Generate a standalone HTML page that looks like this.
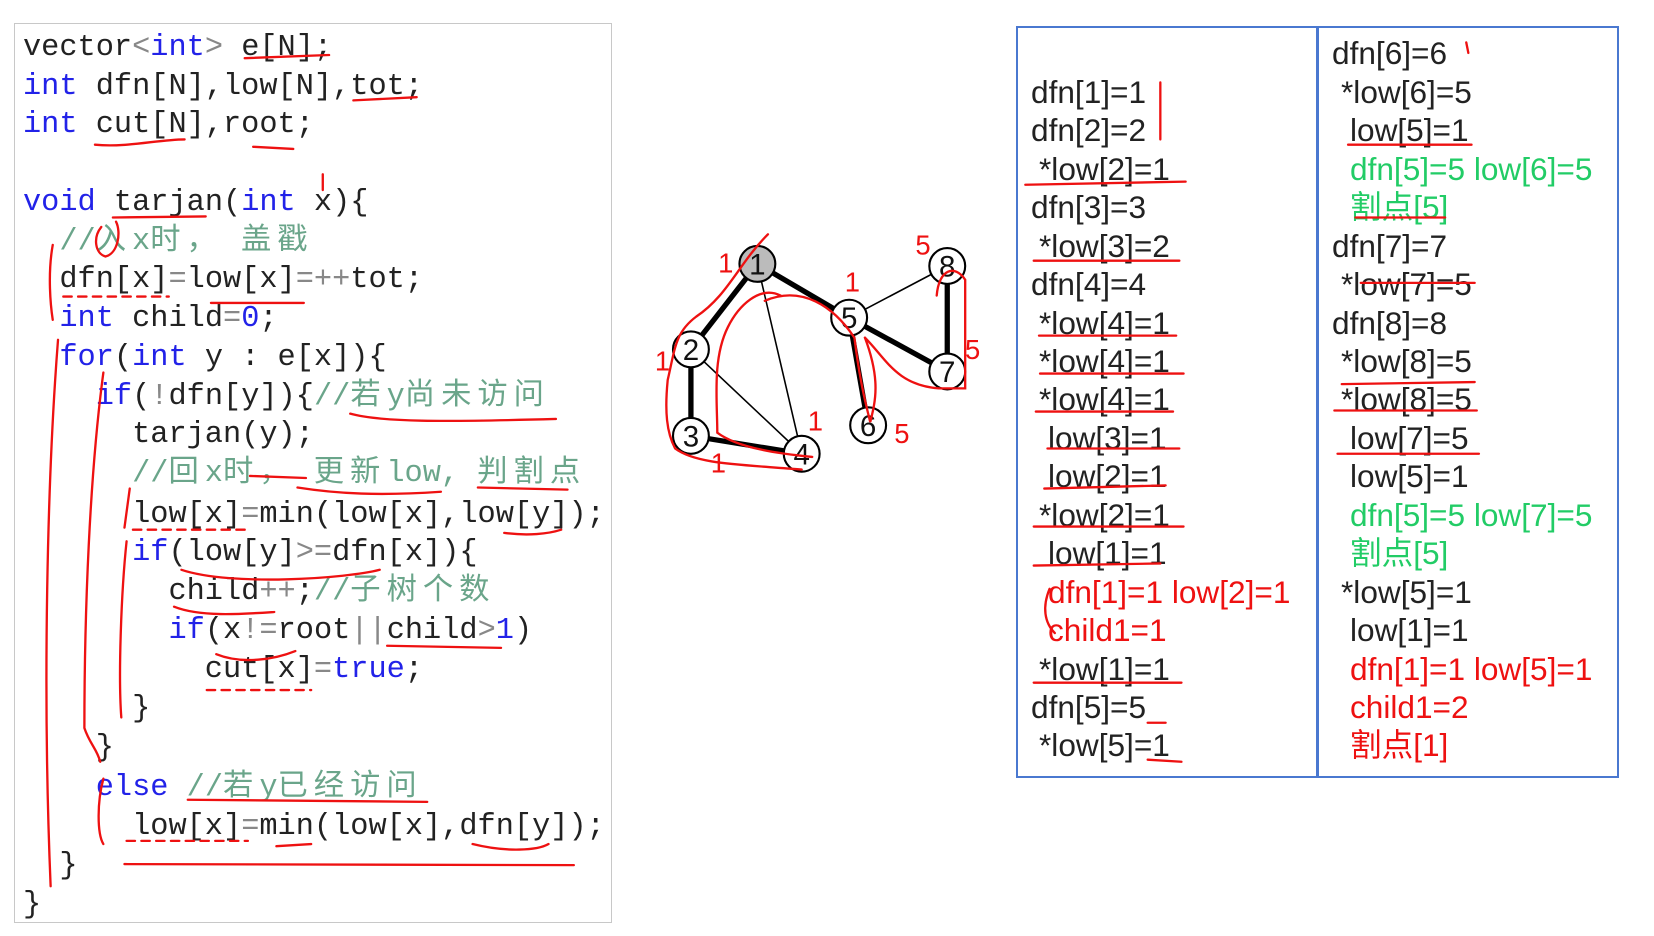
<!DOCTYPE html>
<html><head><meta charset="utf-8"><style>
body{margin:0;width:1654px;height:936px;background:#fff;position:relative;overflow:hidden}
.code{position:absolute;left:14px;top:23px;width:598px;height:900px;border:1.5px solid #c8c8c8;box-sizing:border-box}
.cl{position:absolute;left:23px;font:30.3px/38px "Liberation Mono","Noto Sans CJK SC",monospace;color:#222;white-space:pre}
.k{color:#2222e8}.c{color:#6aa58a}.o{color:#888}.z{letter-spacing:6px}
.box{position:absolute;top:26px;width:302px;height:752px;border:2px solid #4a78d0;box-sizing:border-box}
.t{position:absolute;font:31.6px/36px "Liberation Sans","Noto Sans CJK SC",sans-serif;color:#222;white-space:pre}
.r{color:#ee1111}.g{color:#22cc66}
svg{position:absolute;left:0;top:0}
</style></head><body>
<div class="code"></div>
<div class="cl" style="top:29px">vector<span class="o">&lt;</span><span class="k">int</span><span class="o">&gt;</span> e[N];</div>
<div class="cl" style="top:68px"><span class="k">int</span> dfn[N],low[N],tot;</div>
<div class="cl" style="top:106px"><span class="k">int</span> cut[N],root;</div>
<div class="cl" style="top:184px"><span class="k">void</span> tarjan(<span class="k">int</span> x){</div>
<div class="cl" style="top:223px">  <span class="c">//<span class="z">入</span>x<span class="z">时，</span> <span class="z">盖戳</span></span></div>
<div class="cl" style="top:261px">  dfn[x]<span class="o">=</span>low[x]<span class="o">=++</span>tot;</div>
<div class="cl" style="top:300px">  <span class="k">int</span> child<span class="o">=</span><span class="k">0</span>;</div>
<div class="cl" style="top:339px">  <span class="k">for</span>(<span class="k">int</span> y : e[x]){</div>
<div class="cl" style="top:378px">    <span class="k">if</span>(<span class="o">!</span>dfn[y]){<span class="c">//<span class="z">若</span>y<span class="z">尚未访问</span></span></div>
<div class="cl" style="top:416px">      tarjan(y);</div>
<div class="cl" style="top:455px">      <span class="c">//<span class="z">回</span>x<span class="z">时，</span> <span class="z">更新</span>low, <span class="z">判割点</span></span></div>
<div class="cl" style="top:496px">      low[x]<span class="o">=</span>min(low[x],low[y]);</div>
<div class="cl" style="top:534px">      <span class="k">if</span>(low[y]<span class="o">&gt;=</span>dfn[x]){</div>
<div class="cl" style="top:573px">        child<span class="o">++</span>;<span class="c">//<span class="z">子树个数</span></span></div>
<div class="cl" style="top:612px">        <span class="k">if</span>(x<span class="o">!=</span>root<span class="o">||</span>child<span class="o">&gt;</span><span class="k">1</span>)</div>
<div class="cl" style="top:651px">          cut[x]<span class="o">=</span><span class="k">true</span>;</div>
<div class="cl" style="top:690px">      }</div>
<div class="cl" style="top:729px">    }</div>
<div class="cl" style="top:769px">    <span class="k">else</span> <span class="c">//<span class="z">若</span>y<span class="z">已经访问</span></span></div>
<div class="cl" style="top:808px">      low[x]<span class="o">=</span>min(low[x],dfn[y]);</div>
<div class="cl" style="top:847px">  }</div>
<div class="cl" style="top:886px">}</div>

<div class="box" style="left:1016px"></div>
<div class="box" style="left:1317px"></div>

<div class="t" style="left:1031px;top:74px">dfn[1]=1</div>
<div class="t" style="left:1031px;top:112px">dfn[2]=2</div>
<div class="t" style="left:1039px;top:151px">*low[2]=1</div>
<div class="t" style="left:1031px;top:189px">dfn[3]=3</div>
<div class="t" style="left:1039px;top:228px">*low[3]=2</div>
<div class="t" style="left:1031px;top:266px">dfn[4]=4</div>
<div class="t" style="left:1039px;top:305px">*low[4]=1</div>
<div class="t" style="left:1039px;top:343px">*low[4]=1</div>
<div class="t" style="left:1039px;top:381px">*low[4]=1</div>
<div class="t" style="left:1048px;top:420px">low[3]=1</div>
<div class="t" style="left:1048px;top:458px">low[2]=1</div>
<div class="t" style="left:1039px;top:497px">*low[2]=1</div>
<div class="t" style="left:1048px;top:535px">low[1]=1</div>
<div class="t r" style="left:1048px;top:574px">dfn[1]=1 low[2]=1</div>
<div class="t r" style="left:1048px;top:612px">child1=1</div>
<div class="t" style="left:1039px;top:651px">*low[1]=1</div>
<div class="t" style="left:1031px;top:689px">dfn[5]=5</div>
<div class="t" style="left:1039px;top:727px">*low[5]=1</div>

<div class="t" style="left:1332px;top:35px">dfn[6]=6</div>
<div class="t" style="left:1341px;top:74px">*low[6]=5</div>
<div class="t" style="left:1350px;top:112px">low[5]=1</div>
<div class="t g" style="left:1350px;top:151px">dfn[5]=5 low[6]=5</div>
<div class="t g" style="left:1350px;top:189px">割点[5]</div>
<div class="t" style="left:1332px;top:228px">dfn[7]=7</div>
<div class="t" style="left:1341px;top:266px">*low[7]=5</div>
<div class="t" style="left:1332px;top:305px">dfn[8]=8</div>
<div class="t" style="left:1341px;top:343px">*low[8]=5</div>
<div class="t" style="left:1341px;top:381px">*low[8]=5</div>
<div class="t" style="left:1350px;top:420px">low[7]=5</div>
<div class="t" style="left:1350px;top:458px">low[5]=1</div>
<div class="t g" style="left:1350px;top:497px">dfn[5]=5 low[7]=5</div>
<div class="t g" style="left:1350px;top:535px">割点[5]</div>
<div class="t" style="left:1341px;top:574px">*low[5]=1</div>
<div class="t" style="left:1350px;top:612px">low[1]=1</div>
<div class="t r" style="left:1350px;top:651px">dfn[1]=1 low[5]=1</div>
<div class="t r" style="left:1350px;top:689px">child1=2</div>
<div class="t r" style="left:1350px;top:727px">割点[1]</div>

<svg width="1654" height="936" viewBox="0 0 1568 887">
<g stroke="#000" stroke-width="5">
<line x1="718" y1="250" x2="655" y2="331"/><line x1="655" y1="331" x2="655" y2="413"/>
<line x1="655" y1="413" x2="760" y2="430"/><line x1="718" y1="250" x2="805" y2="301"/>
<line x1="805" y1="301" x2="823" y2="403"/><line x1="805" y1="301" x2="898" y2="352"/>
<line x1="898" y1="252" x2="898" y2="352"/></g>
<g stroke="#000" stroke-width="1.5">
<line x1="718" y1="250" x2="760" y2="430"/><line x1="655" y1="331" x2="760" y2="430"/>
<line x1="805" y1="301" x2="898" y2="252"/></g>
<g stroke="#000" stroke-width="2" fill="#fff">
<circle cx="718" cy="250" r="17" fill="#bbb"/><circle cx="805" cy="301" r="17"/>
<circle cx="898" cy="252" r="17"/><circle cx="655" cy="331" r="17"/>
<circle cx="898" cy="352" r="17"/><circle cx="655" cy="413" r="17"/>
<circle cx="760" cy="430" r="17"/><circle cx="823" cy="403" r="17"/></g>
<g font-family="Liberation Sans,sans-serif" font-size="28" text-anchor="middle" fill="#111">
<text x="718" y="260">1</text><text x="805" y="311">5</text><text x="898" y="262">8</text>
<text x="655" y="341">2</text><text x="898" y="362">7</text><text x="655" y="423">3</text>
<text x="760" y="440">4</text><text x="823" y="413">6</text></g>
<g font-family="Liberation Sans,sans-serif" font-size="26" fill="#e11" text-anchor="middle">
<text x="688" y="258">1</text><text x="808" y="276">1</text><text x="875" y="241">5</text>
<text x="922" y="340">5</text><text x="628" y="351">1</text><text x="773" y="408">1</text>
<text x="855" y="420">5</text><text x="681" y="448">1</text></g>
<g stroke="#e11" stroke-width="2.2" fill="none" stroke-linecap="round">
<path d="M728 222 C700 250 690 280 660 300 C640 315 640 330 633 360 C630 390 632 410 640 425 C660 440 700 440 760 445"/>
<path d="M740 280 C720 270 700 290 690 310 C675 340 680 380 680 410 C700 425 740 430 770 433"/>
<path d="M725 285 C760 270 790 290 810 320 C815 360 820 380 825 400 C830 380 835 360 820 320"/>
<path d="M820 320 C840 340 850 365 890 368 L915 368 L915 265 C905 250 890 255 888 280"/>
<path d="M232 55 L312 52"/><path d="M335 95 L395 92"/><path d="M90 137 C120 140 150 132 175 132"/><path d="M240 139 L278 141"/>
<path d="M107 206 L195 205"/><path d="M96 215 C88 225 90 240 100 243 C112 240 115 220 110 210"/><path d="M306 165 L306 180"/>
<path d="M50 232 C45 260 48 290 50 303"/><path d="M60 281 L160 281" stroke-dasharray="8 6"/><path d="M200 287 L288 287"/>
<path d="M55 322 C45 450 40 650 48 840"/><path d="M98 353 C85 450 80 580 80 690 C85 705 92 710 95 722"/>
<path d="M332 392 C360 400 420 400 527 397"/><path d="M237 451 L290 453"/>
<path d="M282 462 C320 468 360 470 418 466"/><path d="M453 462 L538 464"/>
<path d="M123 463 L118 500"/><path d="M126 502 L235 502" stroke-dasharray="8 6"/><path d="M478 505 C500 508 520 506 532 502"/>
<path d="M120 513 C115 560 112 640 115 680"/><path d="M172 540 C220 556 330 548 360 540"/>
<path d="M165 575 C190 585 230 582 260 580"/><path d="M205 620 C230 630 260 625 280 617"/><path d="M367 612 L475 614"/>
<path d="M196 654 L295 654" stroke-dasharray="8 6"/>
<path d="M98 738 C92 760 92 790 98 800"/><path d="M178 758 L405 760"/>
<path d="M120 797 L235 797" stroke-dasharray="8 6"/><path d="M262 802 L295 800"/><path d="M448 800 C480 808 510 806 520 800"/>
<path d="M118 819 L544 820"/>
<path d="M1100 78 L1100 132"/><path d="M972 175 L1124 172"/><path d="M980 247 L1118 247"/>
<path d="M985 318 L1115 318"/><path d="M986 354 L1122 354"/><path d="M982 390 L1112 390"/>
<path d="M993 425 L1118 425"/><path d="M990 463 L1105 460"/><path d="M980 499 L1122 499"/><path d="M980 536 L1100 534"/>
<path d="M995 558 C988 575 990 590 1000 600"/><path d="M980 647 L1120 647"/><path d="M1088 685 L1105 685"/><path d="M1088 720 L1120 722"/>
<path d="M1390 40 L1392 50"/><path d="M1278 137 L1395 137"/><path d="M1285 206 L1370 206"/>
<path d="M1290 268 L1398 268"/><path d="M1272 364 L1398 362"/><path d="M1265 389 L1400 389"/><path d="M1268 430 L1402 430"/>
</g>
</svg>
</body></html>
